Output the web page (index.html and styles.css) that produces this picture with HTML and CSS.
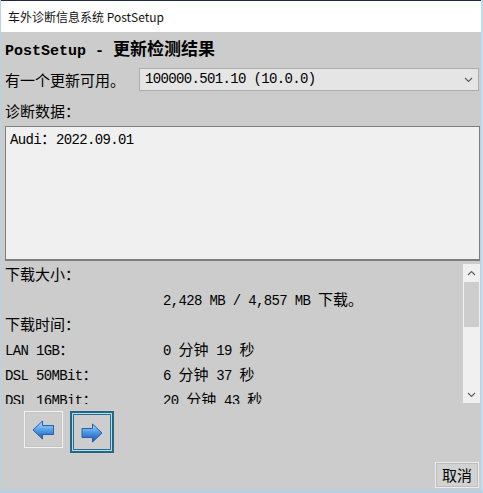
FILE: index.html
```html
<!DOCTYPE html>
<html>
<head>
<meta charset="utf-8">
<link rel="stylesheet" href="styles.css">
</head>
<body>
<div class="window">
  <div class="titlebar">车外诊断信息系统 PostSetup</div>
  <div class="content">
    <div class="heading"><span class="hm">PostSetup - </span>更新检测结果</div>
    <div class="update-row">
      <div class="label upd">有一个更新可用。</div>
      <div class="select">
        <span class="m">100000.501.10 (10.0.0)</span>
        <svg class="chev" width="9" height="6" viewBox="0 0 9 6"><path d="M1 1 L4.5 4.5 L8 1" fill="none" stroke="#5a5a5a" stroke-width="1.1"/></svg>
      </div>
    </div>
    <div class="label diag">诊断数据：</div>
    <div class="textbox"><span class="m">Audi</span>：<span class="m">2022.09.01</span></div>
    <div class="scrollarea">
      <div class="rows">
        <div class="cell">下载大小：</div><div class="cell"></div>
        <div class="cell"></div><div class="cell"><span class="m">2,428 MB / 4,857 MB </span>下载。</div>
        <div class="cell">下载时间：</div><div class="cell"></div>
        <div class="cell"><span class="m">LAN 1GB</span>：</div><div class="cell"><span class="m">0 </span>分钟<span class="m"> 19 </span>秒</div>
        <div class="cell"><span class="m">DSL 50MBit</span>：</div><div class="cell"><span class="m">6 </span>分钟<span class="m"> 37 </span>秒</div>
        <div class="cell"><span class="m">DSL 16MBit</span>：</div><div class="cell"><span class="m">20 </span>分钟<span class="m"> 43 </span>秒</div>
      </div>
      <div class="scrollbar">
        <div class="sb-btn"><svg width="9" height="6" viewBox="0 0 9 6"><path d="M1 5 L4.5 1.5 L8 5" fill="none" stroke="#606060" stroke-width="1.2"/></svg></div>
        <div class="sb-thumb"></div>
        <div class="sb-track"></div>
        <div class="sb-btn"><svg width="9" height="6" viewBox="0 0 9 6"><path d="M1 1 L4.5 4.5 L8 1" fill="none" stroke="#606060" stroke-width="1.2"/></svg></div>
      </div>
    </div>
    <div class="nav">
      <div class="navbtn back">
        <svg width="23" height="20" viewBox="0 0 23 20">
          <defs>
            <linearGradient id="ga" x1="0" y1="0" x2="0" y2="1">
              <stop offset="0" stop-color="#b8e2ff"/>
              <stop offset="0.45" stop-color="#5aa8ec"/>
              <stop offset="1" stop-color="#1a55b8"/>
            </linearGradient>
          </defs>
          <path d="M1 10 L10.5 1 L10.5 5.5 L21.5 5.5 L21.5 14.5 L10.5 14.5 L10.5 19 Z" fill="url(#ga)" stroke="#2b5ca6" stroke-width="1"/>
        </svg>
      </div>
      <div class="navbtn next">
        <svg width="22" height="20" viewBox="0 0 22 20">
          <defs>
            <linearGradient id="gb" x1="0" y1="0" x2="0" y2="1">
              <stop offset="0" stop-color="#a9dbff"/>
              <stop offset="0.45" stop-color="#4e9be6"/>
              <stop offset="1" stop-color="#1a4fae"/>
            </linearGradient>
          </defs>
          <path d="M21 10 L11.5 1 L11.5 5.5 L1 5.5 L1 14.5 L11.5 14.5 L11.5 19 Z" fill="url(#gb)" stroke="#2b5ca6" stroke-width="1"/>
        </svg>
      </div>
    </div>
    <div class="footer"><div class="cancel">取消</div></div>
  </div>
</div>
</body>
</html>
```
FILE: styles.css
```css
* { box-sizing: border-box; }
html, body { margin: 0; padding: 0; }
body {
  width: 483px;
  height: 493px;
  overflow: hidden;
  background: #cccccc;
  font-family: "Noto Sans CJK SC", "Liberation Sans", sans-serif;
  color: #000;
}
.window {
  width: 483px;
  height: 493px;
  border-left: 1px solid #b7d3e6;
  border-right: 2px solid #c3dcec;
  border-bottom: 3px solid #b3d0e4;
  background: #cccccc;
  display: flex;
  flex-direction: column;
}
.titlebar {
  height: 32px;
  border-top: 1px solid #1b2945;
  background: #ffffff;
  padding-left: 7px;
  font-size: 12px;
  line-height: 31px;
  color: #111;
  flex: none;
}
.content {
  flex: 1;
  padding: 0 1px 0 4px;
  display: flex;
  flex-direction: column;
}
.m {
  font-family: "Liberation Mono", monospace;
  font-size: 14px;
  letter-spacing: -0.65px;
}
.heading {
  margin-top: 6px;
  height: 20px;
  line-height: 20px;
  font-size: 17px;
  font-weight: bold;
  white-space: pre;
}
.hm {
  font-family: "Liberation Mono", monospace;
  font-size: 15px;
  font-weight: bold;
}
.label {
  font-size: 15px;
  white-space: pre;
}
.update-row {
  margin-top: 10px;
  height: 23px;
  display: flex;
  align-items: center;
}
.upd {
  width: 134px;
  line-height: 23px;
  flex: none;
}
.select {
  flex: 1;
  margin-right: 1px;
  height: 23px;
  background: #e5e5e5;
  border: 1px solid #adadad;
  display: flex;
  align-items: center;
  justify-content: space-between;
  padding: 0 5px 0 5px;
  line-height: 21px;
}
.chev { margin-top: 1px; }
.diag {
  margin-top: 8px;
  height: 24px;
  line-height: 24px;
}
.textbox {
  margin-top: 3px;
  height: 135px;
  background: #f0f0f0;
  border: 1px solid #7d7d7d;
  border-bottom-width: 2px;
  padding: 1px 4px;
  font-size: 15px;
  line-height: 20px;
}
.scrollarea {
  height: 143px;
  display: flex;
  overflow: hidden;
}
.rows {
  flex: 1;
  display: grid;
  grid-template-columns: 158px 1fr;
  grid-auto-rows: 25px;
  font-size: 15px;
}
.cell {
  line-height: 25px;
  white-space: pre;
}
.scrollbar {
  width: 17px;
  margin-top: 3px;
  height: 139px;
  background: #f0f0f0;
  display: flex;
  flex-direction: column;
  flex: none;
}
.sb-btn {
  height: 17px;
  display: flex;
  align-items: center;
  justify-content: center;
  flex: none;
}
.sb-thumb {
  height: 45px;
  background: #cdcdcd;
  margin: 1px 1px 0 1px;
  flex: none;
}
.sb-track { flex: 1; }
.nav {
  margin-top: 7px;
  height: 42px;
  display: flex;
  align-items: flex-start;
  gap: 7px;
  padding-left: 19px;
}
.navbtn {
  display: flex;
  align-items: center;
  justify-content: center;
  background: #cdcdcd;
}
.back {
  width: 39px;
  height: 37px;
  border: 1px solid #f2f2f2;
  box-shadow: inset 0 0 0 1px #c4c4c4;
}
.next {
  width: 44px;
  height: 42px;
  border: 2px solid #266684;
  box-shadow: inset 0 0 0 1px #a8e2f2, inset 0 0 0 2px #2d6d8a;
  padding-top: 2px;
}
.footer {
  margin-top: 9px;
  display: flex;
  justify-content: flex-end;
  padding-right: 1px;
}
.cancel {
  width: 44px;
  height: 26px;
  border: 1px solid #ececec;
  box-shadow: inset 0 0 0 1px #bdbdbd;
  background: #d2d2d2;
  font-size: 15px;
  line-height: 24px;
  text-align: center;
}
```
